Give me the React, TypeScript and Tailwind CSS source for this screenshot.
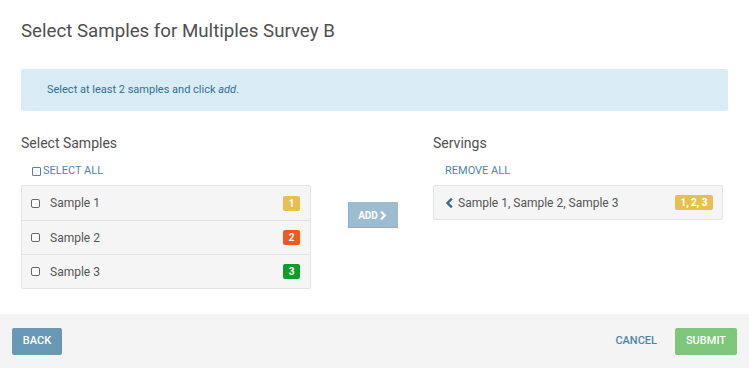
import React from "react";

const ChevronRight = ({ className }: { className?: string }) => (
  <svg viewBox="0 0 10 10" className={className} fill="none" stroke="currentColor" strokeWidth={2.4} strokeLinecap="square">
    <path d="M3 1.5 L6.5 5 L3 8.5" />
  </svg>
);
const ChevronLeft = ({ className }: { className?: string }) => (
  <svg viewBox="0 0 10 10" className={className} fill="none" stroke="currentColor" strokeWidth={2.4} strokeLinecap="square">
    <path d="M7 1.5 L3.5 5 L7 8.5" />
  </svg>
);

const Box = () => (
  <span className="inline-block w-[9px] h-[9px] border border-[#666] rounded-[2px] bg-white" />
);

const samples = [
  { name: "Sample 1", n: "1", color: "bg-[#e9bf4f]" },
  { name: "Sample 2", n: "2", color: "bg-[#f05a22]" },
  { name: "Sample 3", n: "3", color: "bg-[#0e9d2b]" },
];

export default function App() {
  return (
    <div className="w-[749px] h-[368px] bg-white flex flex-col font-['Roboto',sans-serif] overflow-hidden">
      <div className="flex-1 px-[21px]">
        <h1 className="text-[18.7px] leading-[20px] text-[#505050] mt-[21px]">Select Samples for Multiples Survey B</h1>
        <div className="mt-[28px] h-[42px] w-[707px] bg-[#d9ecf6] rounded-[2px] flex items-center pl-[26px] text-[11px] text-[#31708f]">
          <span>Select at least 2 samples and click <i>add</i>.</span>
        </div>
        <div className="flex mt-[24px]">
          <div className="w-[290px]">
            <div className="text-[14px] leading-[16px] text-[#505050] h-[16px]">Select Samples</div>
            <div className="mt-[13px] h-[14px] pl-[11px] flex items-center gap-[2px] text-[11px] text-[#4f86a8]">
              <span className="inline-block w-[9px] h-[9px] border border-[#4f86a8] rounded-[1px]" />
              <span>SELECT ALL</span>
            </div>
            <div className="mt-[7px] border border-[#e3e3e3] rounded-[2px] bg-[#f5f5f5]">
              {samples.map((s, i) => (
                <div
                  key={s.name}
                  className={`h-[34px] flex items-center pl-[9px] pr-[10px] ${i > 0 ? "border-t border-[#e3e3e3]" : ""}`}
                >
                  <Box />
                  <span className="ml-[10px] text-[12px] text-[#555]">{s.name}</span>
                  <span className={`ml-auto w-[17px] h-[15px] rounded-[2px] ${s.color} text-white text-[10px] font-bold flex items-center justify-center`}>
                    {s.n}
                  </span>
                </div>
              ))}
            </div>
          </div>
          <div className="w-[122px] flex justify-center pt-[67px]">
            <div className="w-[50px] h-[26px] bg-[#9dbcd0] border border-[#72b3ea] border-t-[#9dbcd0] border-r-[#9dbcd0] flex items-center justify-center text-white text-[10px] font-bold gap-[1px] ml-[2px]">
              <span>ADD</span>
              <ChevronRight className="w-[9px] h-[9px]" />
            </div>
          </div>
          <div className="w-[290px]">
            <div className="text-[14px] leading-[16px] text-[#505050] h-[16px]">Servings</div>
            <div className="mt-[13px] h-[14px] pl-[12px] flex items-center text-[11px] text-[#4f86a8]">REMOVE ALL</div>
            <div className="mt-[7px] border border-[#e3e3e3] rounded-[2px] bg-[#f5f5f5] h-[35px] flex items-center pl-[10px] pr-[9px]">
              <ChevronLeft className="w-[10px] h-[10px] text-[#3a6b8c]" />
              <span className="ml-[4px] text-[12px] text-[#555]">Sample 1, Sample 2, Sample 3</span>
              <span className="ml-auto w-[38px] h-[15px] rounded-[2px] bg-[#e9bf4f] text-white text-[10px] font-bold flex items-center justify-center">
                1, 2, 3
              </span>
            </div>
          </div>
        </div>
      </div>
      <div className="h-[54px] bg-[#f4f4f4] flex items-center px-[12px]">
        <div className="w-[50px] h-[27px] bg-[#6898b4] rounded-[2px] text-white text-[11px] font-medium flex items-center justify-center">BACK</div>
        <div className="ml-auto text-[11px] text-[#4f86a8] font-medium mr-[18px]">CANCEL</div>
        <div className="w-[62px] h-[27px] bg-[#7dc67b] rounded-[2px] text-white text-[11px] font-medium flex items-center justify-center">SUBMIT</div>
      </div>
    </div>
  );
}
